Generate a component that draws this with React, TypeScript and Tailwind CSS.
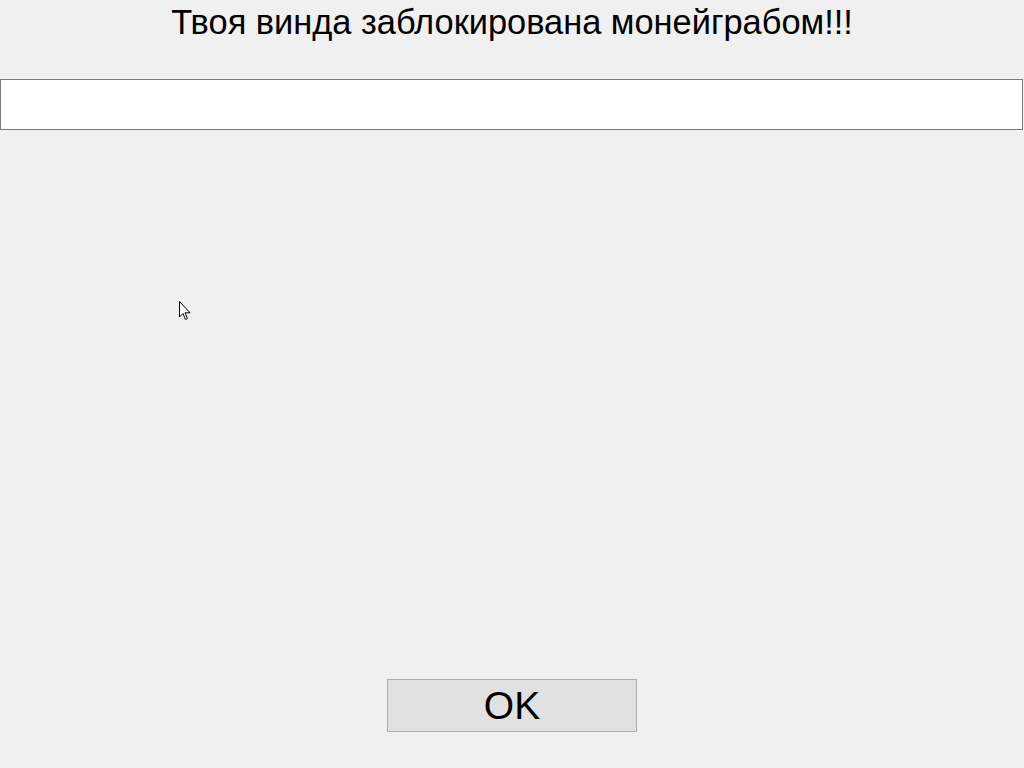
import React from "react";

export default function App() {
  return (
    <div className="relative flex h-[768px] w-[1024px] flex-col bg-[#f0f0f0] font-['Liberation_Sans',Arial,sans-serif] text-black">
      <div className="flex h-[79px] justify-center">
        <h1 className="text-[34.4px] leading-[44px] font-normal">Твоя винда заблокирована монейграбом!!!</h1>
      </div>
      <input
        type="text"
        className="h-[51px] w-[1023px] border border-[#7a7a7a] bg-white px-2 text-[20px] outline-none"
      />
      <div className="flex-1" />
      <div className="flex justify-center pb-[36px]">
        <button className="flex h-[53px] w-[250px] items-center justify-center border border-[#adadad] bg-[#e1e1e1] text-[39px] leading-none">
          OK
        </button>
      </div>
      <svg className="absolute left-[179px] top-[301px]" width="13" height="20" viewBox="0 0 13 20">
        <path d="M0.5 0.5 L0.5 16 L4 12.5 L6.5 18.5 L8.5 17.5 L6 11.8 L11 11.8 Z" fill="#fff" stroke="#000" strokeWidth="1" />
      </svg>
    </div>
  );
}
